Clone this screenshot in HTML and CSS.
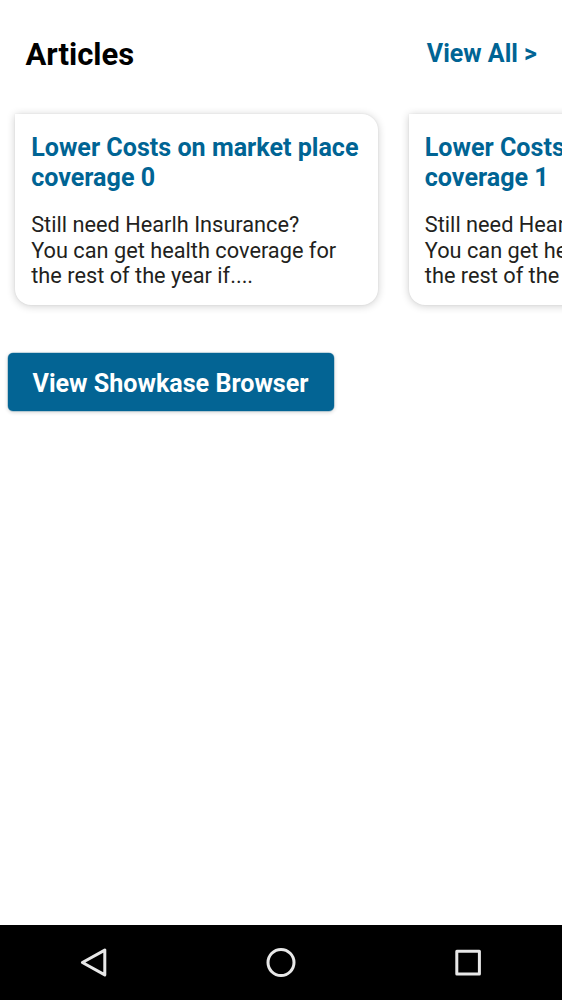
FILE: index.html
```html
<!DOCTYPE html>
<html lang="en">
<head>
<meta charset="utf-8">
<title>Articles</title>
<link rel="stylesheet" href="styles.css">
</head>
<body>
<main class="content">
  <header class="section-header">
    <h1 class="section-title">Articles</h1>
    <a class="view-all">View All &gt;</a>
  </header>
  <div class="carousel">
    <article class="card">
      <h2 class="card-title">Lower Costs on market place<br>coverage 0</h2>
      <p class="card-text">Still need Hearlh Insurance?<br>You can get health coverage for<br>the rest of the year if....</p>
    </article>
    <article class="card">
      <h2 class="card-title">Lower Costs on market place<br>coverage 1</h2>
      <p class="card-text">Still need Hearlh Insurance?<br>You can get health coverage for<br>the rest of the year if....</p>
    </article>
  </div>
  <button class="browser-button">View Showkase Browser</button>
</main>
<nav class="nav-bar">
  <svg class="nav-icon" viewBox="0 0 36 36"><path d="M28.8 5.1v24.8L6.4 17.5z"/></svg>
  <svg class="nav-icon" viewBox="0 0 36 36"><circle cx="18" cy="17.5" r="13"/></svg>
  <svg class="nav-icon" viewBox="0 0 36 36"><rect x="6.8" y="6.3" width="22.6" height="22.6"/></svg>
</nav>
</body>
</html>
```

FILE: styles.css
```css
* { box-sizing: border-box; }
body {
  margin: 0;
  height: 1000px;
  display: flex;
  flex-direction: column;
  overflow: hidden;
  background: #fff;
  font-family: Roboto, sans-serif;
}
.content { flex: 1; }
.section-header {
  display: flex;
  justify-content: space-between;
  align-items: center;
  height: 107px;
  padding: 0 25px 0 25.5px;
}
.section-title { margin: 0; padding-top: 1px; font-size: 31px; font-weight: 700; color: #000; }
.view-all { font-size: 25px; font-weight: 700; color: #006494; }
.carousel {
  display: flex;
  gap: 31px;
  padding: 7px 0 16px 15.4px;
  overflow: hidden;
}
.card {
  flex: 0 0 362.6px;
  height: 191px;
  padding: 19px 15.8px;
  border-radius: 0 16px 16px 16px;
  background: #fff;
  box-shadow: 0 1px 9px rgba(0, 0, 0, .2), 0 0 2px rgba(0, 0, 0, .07);
  white-space: nowrap;
}
.card-title { margin: 0; font-size: 25.1px; line-height: 30px; font-weight: 700; color: #006494; }
.card-text { margin: 19px 0 0; font-size: 21.75px; line-height: 25.6px; color: #231f20; }
.browser-button {
  display: block;
  width: 326px;
  height: 58px;
  margin: 32px 0 0 8px;
  padding: 2px 1px 0 0;
  border: 0;
  border-radius: 5px;
  background: #036494;
  color: #fff;
  font: 700 25.1px Roboto, sans-serif;
  box-shadow: 0 0 0 .5px rgba(3, 100, 148, .4), 0 1px 4px rgba(0, 0, 0, .2);
}
.nav-bar {
  display: flex;
  justify-content: space-around;
  align-items: center;
  height: 75px;
  background: #000;
}
.nav-icon {
  width: 36px;
  height: 36px;
  fill: none;
  stroke: #e8e8e8;
  stroke-width: 3;
  stroke-linejoin: round;
}
```
